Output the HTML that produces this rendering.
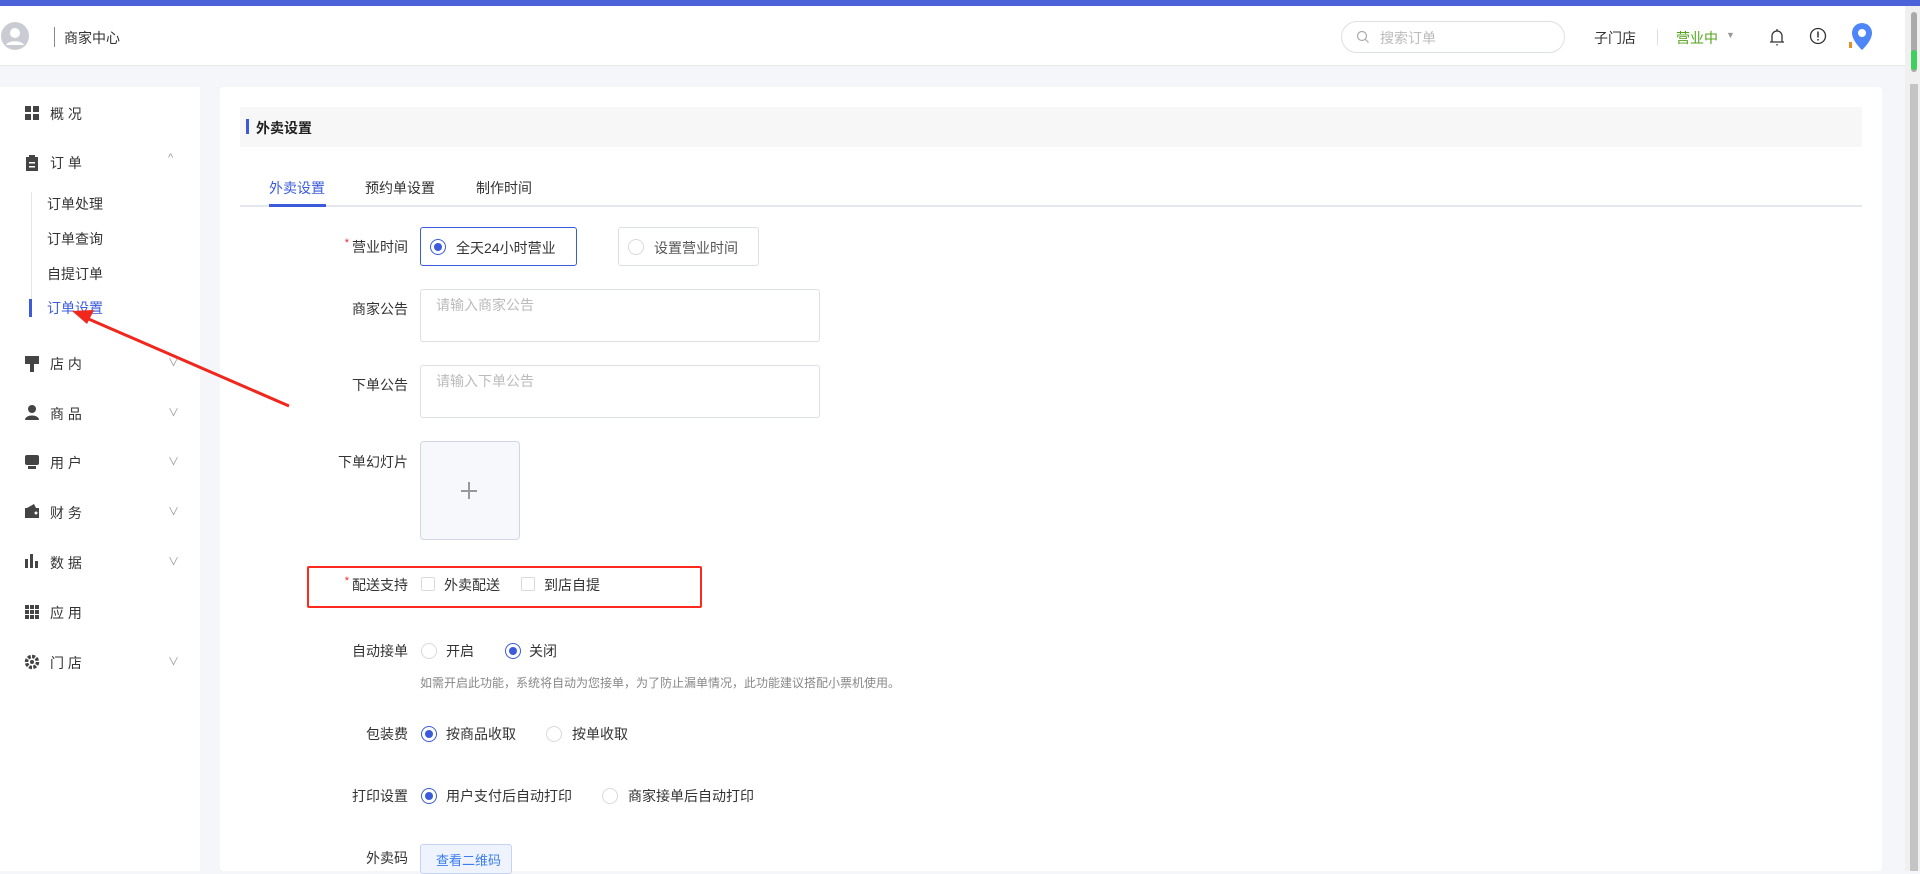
<!DOCTYPE html>
<html><head><meta charset="utf-8"><style>
*{margin:0;padding:0;box-sizing:border-box}
body{width:1920px;height:871px;overflow:hidden;background:#f5f6f9;font-family:"Liberation Sans","Noto Sans CJK SC",sans-serif;font-size:14px;color:#333;position:relative}
.a{position:absolute;white-space:nowrap}
.lbl{position:absolute;right:1512px;text-align:right;white-space:nowrap;color:#333}
.star{color:#f5222d;font-size:11px;margin-right:3px;vertical-align:top}
.radio{position:absolute;width:16px;height:16px;border:1px solid #d9d9d9;border-radius:50%;background:#fff}
.radio.on{border-color:#3b5bdb}
.radio.on:after{content:"";position:absolute;left:3px;top:3px;width:8px;height:8px;border-radius:50%;background:#3b5bdb}
.cb{position:absolute;width:14px;height:14px;border:1px solid #d9d9d9;border-radius:2px;background:#fff}
.side{position:absolute;left:0;width:200px;color:#333;font-size:14px}
.caret{position:absolute;left:168px;color:#999;font-size:11px}
</style></head><body>
<div class="a" style="left:0;top:0;width:1920px;height:6px;background:#4b62d8"></div>
<div class="a" style="left:0;top:6px;width:1905px;height:60px;background:#fff;border-bottom:1px solid #e4e6eb"></div>
<svg class="a" style="left:1px;top:22px" width="28" height="28" viewBox="0 0 28 28"><circle cx="14" cy="14" r="14" fill="#c9ccd3"/><circle cx="14" cy="11" r="5" fill="#fff"/><path d="M5 23c2-5 16-5 18 0" fill="#fff"/></svg>
<div class="a" style="left:54px;top:27px;width:1px;height:20px;background:#888"></div>
<div class="a" style="left:64px;top:28px;font-size:14px;color:#333">商家中心</div>
<div class="a" style="left:1341px;top:21px;width:224px;height:32px;border:1px solid #dcdfe6;border-radius:16px;background:#fff"></div>
<svg class="a" style="left:1356px;top:30px" width="14" height="14" viewBox="0 0 14 14"><circle cx="6" cy="6" r="4.5" fill="none" stroke="#aaa" stroke-width="1.2"/><path d="M9.5 9.5l3 3" stroke="#aaa" stroke-width="1.2"/></svg>
<div class="a" style="left:1380px;top:28px;color:#bbb">搜索订单</div>
<div class="a" style="left:1594px;top:28px;color:#333">子门店</div>
<div class="a" style="left:1657px;top:29px;width:1px;height:16px;background:#ddd"></div>
<div class="a" style="left:1676px;top:28px;color:#52a41a">营业中</div>
<div class="a" style="left:1726px;top:30px;color:#999;font-size:9px">▼</div>
<svg class="a" style="left:1768px;top:27px" width="18" height="20" viewBox="0 0 18 20"><path d="M4 15V9a5 5 0 0110 0v6M2 15h14M9 2v2M9 17v1.5" fill="none" stroke="#333" stroke-width="1.3"/></svg>
<svg class="a" style="left:1809px;top:27px" width="18" height="18" viewBox="0 0 18 18"><circle cx="9" cy="9" r="7.5" fill="none" stroke="#333" stroke-width="1.3"/><path d="M9 4.5v6M9 12v1.5" stroke="#333" stroke-width="1.5"/></svg>
<svg class="a" style="left:1848px;top:22px" width="26" height="30" viewBox="0 0 26 30"><path d="M14 1a10 10 0 00-10 10c0 8 10 17 10 17s10-9 10-17A10 10 0 0014 1z" fill="#4f86f7"/><circle cx="14" cy="11" r="4" fill="#fff"/><rect x="1" y="20" width="3" height="6" fill="#e0902a"/></svg>
<div class="a" style="left:1905px;top:6px;width:15px;height:865px;background:#f0f0f0"></div>
<div class="a" style="left:1911px;top:12px;width:6px;height:60px;background:#aaa;border-radius:3px"></div>
<div class="a" style="left:1911px;top:50px;width:6px;height:20px;background:#3ecf5c;border-radius:3px"></div>
<div class="a" style="left:1910px;top:84px;width:8px;height:787px;background:#c4c4c4"></div>

<div class="a" style="left:0;top:87px;width:200px;height:784px;background:#fff"></div>
<div class="a" style="left:220px;top:87px;width:1662px;height:784px;background:#fff;border-radius:4px"></div>

<!-- sidebar -->
<svg class="a" style="left:25px;top:106px" width="14" height="14"><rect x="0" y="0" width="6" height="6" fill="#444"/><rect x="8" y="0" width="6" height="6" fill="#444"/><rect x="0" y="8" width="6" height="6" fill="#444"/><rect x="8" y="8" width="6" height="6" fill="#444"/></svg>
<div class="side" style="left:50px;top:104px">概 况</div>
<svg class="a" style="left:25px;top:155px" width="14" height="16"><rect x="1" y="2" width="12" height="14" fill="#444"/><rect x="4" y="0" width="6" height="3" fill="#444"/><rect x="4" y="7" width="6" height="1.5" fill="#fff"/><rect x="4" y="11" width="6" height="1.5" fill="#fff"/></svg>
<div class="side" style="left:50px;top:153px">订 单</div>
<div class="caret" style="left:168px;top:152px">^</div>
<div class="a" style="left:31px;top:192px;width:1px;height:120px;background:#e6e6e6"></div>
<div class="side" style="left:47px;top:194px">订单处理</div>
<div class="side" style="left:47px;top:229px">订单查询</div>
<div class="side" style="left:47px;top:264px">自提订单</div>
<div class="a" style="left:29px;top:299px;width:3px;height:18px;background:#3b5bdb"></div>
<div class="side" style="left:47px;top:298px;color:#3b5bdb">订单设置</div>
<svg class="a" style="left:25px;top:356px" width="14" height="16"><rect x="0" y="0" width="14" height="8" fill="#444"/><rect x="5" y="8" width="4" height="8" fill="#444"/></svg>
<div class="side" style="left:50px;top:354px">店 内</div><div class="caret" style="top:354px">∨</div>
<svg class="a" style="left:25px;top:405px" width="14" height="15"><circle cx="7" cy="4" r="4" fill="#444"/><path d="M0 15c0-6 14-6 14 0z" fill="#444"/></svg>
<div class="side" style="left:50px;top:404px">商 品</div><div class="caret" style="top:404px">∨</div>
<svg class="a" style="left:25px;top:455px" width="14" height="14"><rect x="0" y="0" width="14" height="10" rx="2" fill="#444"/><rect x="3" y="11" width="8" height="3" fill="#444"/></svg>
<div class="side" style="left:50px;top:453px">用 户</div><div class="caret" style="top:453px">∨</div>
<svg class="a" style="left:25px;top:504px" width="14" height="14"><rect x="0" y="4" width="14" height="10" fill="#444"/><path d="M2 4l7-4 2 4z" fill="#444"/><circle cx="11" cy="9" r="1.5" fill="#fff"/></svg>
<div class="side" style="left:50px;top:503px">财 务</div><div class="caret" style="top:503px">∨</div>
<svg class="a" style="left:25px;top:554px" width="14" height="14"><rect x="0" y="5" width="3" height="9" fill="#444"/><rect x="5" y="0" width="3" height="14" fill="#444"/><rect x="10" y="7" width="3" height="7" fill="#444"/></svg>
<div class="side" style="left:50px;top:553px">数 据</div><div class="caret" style="top:553px">∨</div>
<svg class="a" style="left:25px;top:605px" width="14" height="14"><g fill="#444"><rect x="0" y="0" width="4" height="4"/><rect x="5" y="0" width="4" height="4"/><rect x="10" y="0" width="4" height="4"/><rect x="0" y="5" width="4" height="4"/><rect x="5" y="5" width="4" height="4"/><rect x="10" y="5" width="4" height="4"/><rect x="0" y="10" width="4" height="4"/><rect x="5" y="10" width="4" height="4"/><rect x="10" y="10" width="4" height="4"/></g></svg>
<div class="side" style="left:50px;top:603px">应 用</div>
<svg class="a" style="left:24px;top:654px" width="16" height="16" viewBox="0 0 16 16"><circle cx="8" cy="8" r="5.5" fill="none" stroke="#444" stroke-width="3.5" stroke-dasharray="3 1.3"/><circle cx="8" cy="8" r="2" fill="#444"/></svg>
<div class="side" style="left:50px;top:653px">门 店</div><div class="caret" style="top:653px">∨</div>

<!-- content -->
<div class="a" style="left:240px;top:107px;width:1622px;height:40px;background:#f7f7f8"></div>
<div class="a" style="left:246px;top:119px;width:3px;height:15px;background:#3b5bdb"></div>
<div class="a" style="left:256px;top:118px;font-weight:bold;color:#222">外卖设置</div>
<div class="a" style="left:240px;top:205px;width:1622px;height:2px;background:#e4e7ed"></div>
<div class="a" style="left:269px;top:178px;color:#3b5bdb">外卖设置</div>
<div class="a" style="left:269px;top:204px;width:57px;height:3px;background:#3b5bdb"></div>
<div class="a" style="left:365px;top:178px">预约单设置</div>
<div class="a" style="left:476px;top:178px">制作时间</div>

<div class="lbl" style="top:237px"><span class="star">*</span>营业时间</div>
<div class="a" style="left:420px;top:227px;width:157px;height:39px;border:1px solid #3b5bdb;border-radius:3px"></div>
<div class="radio on" style="left:430px;top:239px"></div>
<div class="a" style="left:456px;top:238px">全天24小时营业</div>
<div class="a" style="left:618px;top:227px;width:141px;height:39px;border:1px solid #dcdfe6;border-radius:3px"></div>
<div class="radio" style="left:628px;top:239px"></div>
<div class="a" style="left:654px;top:238px;color:#555">设置营业时间</div>

<div class="lbl" style="top:299px">商家公告</div>
<div class="a" style="left:420px;top:289px;width:400px;height:53px;border:1px solid #dcdfe6;border-radius:3px"></div>
<div class="a" style="left:436px;top:295px;color:#bbb">请输入商家公告</div>
<div class="lbl" style="top:375px">下单公告</div>
<div class="a" style="left:420px;top:365px;width:400px;height:53px;border:1px solid #dcdfe6;border-radius:3px"></div>
<div class="a" style="left:436px;top:371px;color:#bbb">请输入下单公告</div>

<div class="lbl" style="top:452px">下单幻灯片</div>
<div class="a" style="left:420px;top:441px;width:100px;height:99px;border:1px solid #d0d6e6;border-radius:4px;background:#f7f8fc"></div>
<div class="a" style="left:461px;top:490px;width:16px;height:1.5px;background:#999"></div>
<div class="a" style="left:468px;top:482px;width:1.5px;height:17px;background:#999"></div>

<div class="a" style="left:307px;top:566px;width:395px;height:42px;border:2.5px solid #ff2a1e;border-radius:2px"></div>
<div class="lbl" style="top:575px"><span class="star">*</span>配送支持</div>
<div class="cb" style="left:421px;top:577px"></div>
<div class="a" style="left:444px;top:575px">外卖配送</div>
<div class="cb" style="left:521px;top:577px"></div>
<div class="a" style="left:544px;top:575px">到店自提</div>

<div class="lbl" style="top:641px">自动接单</div>
<div class="radio" style="left:421px;top:643px"></div>
<div class="a" style="left:446px;top:641px">开启</div>
<div class="radio on" style="left:505px;top:643px"></div>
<div class="a" style="left:529px;top:641px">关闭</div>
<div class="a" style="left:420px;top:674px;font-size:12px;color:#888">如需开启此功能，系统将自动为您接单，为了防止漏单情况，此功能建议搭配小票机使用。</div>

<div class="lbl" style="top:724px">包装费</div>
<div class="radio on" style="left:421px;top:726px"></div>
<div class="a" style="left:446px;top:724px">按商品收取</div>
<div class="radio" style="left:546px;top:726px"></div>
<div class="a" style="left:572px;top:724px">按单收取</div>

<div class="lbl" style="top:786px">打印设置</div>
<div class="radio on" style="left:421px;top:788px"></div>
<div class="a" style="left:446px;top:786px">用户支付后自动打印</div>
<div class="radio" style="left:602px;top:788px"></div>
<div class="a" style="left:628px;top:786px">商家接单后自动打印</div>

<div class="lbl" style="top:848px">外卖码</div>
<div class="a" style="left:420px;top:844px;width:92px;height:30px;border:1px solid #c5d3f5;border-radius:3px;background:#eef3fd"></div>
<div class="a" style="left:436px;top:850px;font-size:13px;color:#3b7cf0">查看二维码</div>

<svg class="a" style="left:0;top:0" width="400" height="500"><line x1="289" y1="406" x2="84" y2="317" stroke="#f0271c" stroke-width="3"/><path d="M72 311l22-1-7 14z" fill="#f0271c"/></svg>
</body></html>
